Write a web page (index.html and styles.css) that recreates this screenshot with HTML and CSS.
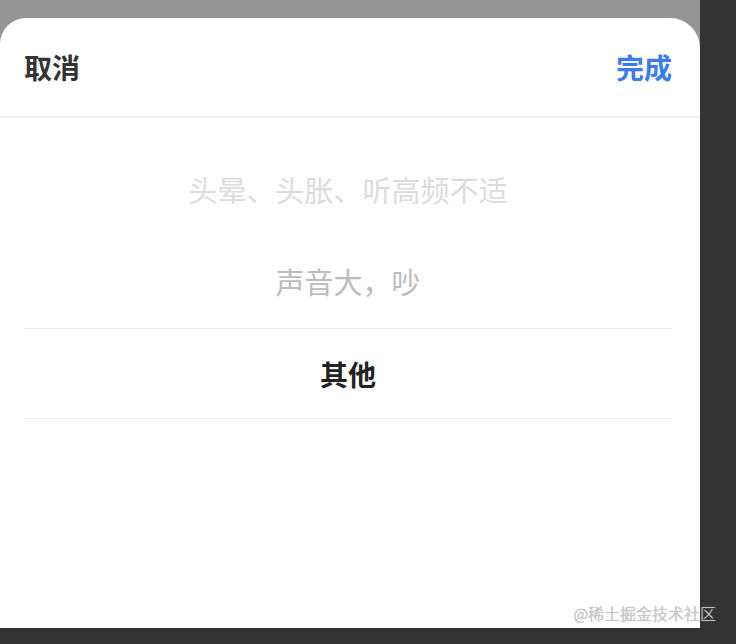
FILE: index.html
```html
<!DOCTYPE html>
<html lang="zh-CN">

<head>
    <meta charset="UTF-8">
    <meta name="viewport" content="width=device-width, initial-scale=1.0">
    <title>选择原因</title>
    <link rel="stylesheet" href="styles.css">
</head>

<body>
    <div class="screen">
        <div class="sheet">
            <div class="sheet-header">
                <span class="btn-cancel">取消</span>
                <span class="btn-done">完成</span>
            </div>
            <div class="picker">
                <div class="picker-item far">头晕、头胀、听高频不适</div>
                <div class="picker-item near">声音大，吵</div>
                <div class="picker-item selected">其他</div>
            </div>
        </div>
    </div>
    <div class="watermark">@稀土掘金技术社区</div>
</body>

</html>
```

FILE: styles.css
```css
body {
    margin: 0;
    height: 644px;
    background-color: #333333;
    font-family: "Noto Sans CJK SC", "Noto Sans", sans-serif;
    overflow: hidden;
    position: relative;
}

.screen {
    width: 700px;
    height: 628px;
    background-color: #959595;
    padding-top: 18px;
    box-sizing: border-box;
    display: flex;
}

.sheet {
    flex: 1;
    background-color: #FFF;
    border-radius: 26px 30px 0 0;
}

.sheet-header {
    height: 98px;
    padding: 0 28px 0 24px;
    display: flex;
    align-items: center;
    justify-content: space-between;
    border-bottom: 2px solid #f1f1f1;
    font-size: 28px;
    font-weight: 700;
}

.btn-cancel {
    color: #333;
}

.btn-done {
    color: #3a7cf1;
}

.picker {
    padding: 25px 28px 0 24px;
}

.picker-item {
    height: 91px;
    display: flex;
    align-items: center;
    justify-content: center;
    font-size: 29px;
}

.far {
    color: #dcdcdc;
}

.near {
    height: 94px;
    color: #bcbcbc;
}

.selected {
    height: 89px;
    color: #222;
    font-weight: 700;
    font-size: 28px;
    border-top: 1px solid #eeeeee;
    border-bottom: 1px solid #eeeeee;
}

.watermark {
    position: absolute;
    right: 20px;
    bottom: 19px;
    font-size: 16px;
    font-weight: 300;
    color: #cfcfcf;
    text-shadow: 0 0 1px #888;
}
```
